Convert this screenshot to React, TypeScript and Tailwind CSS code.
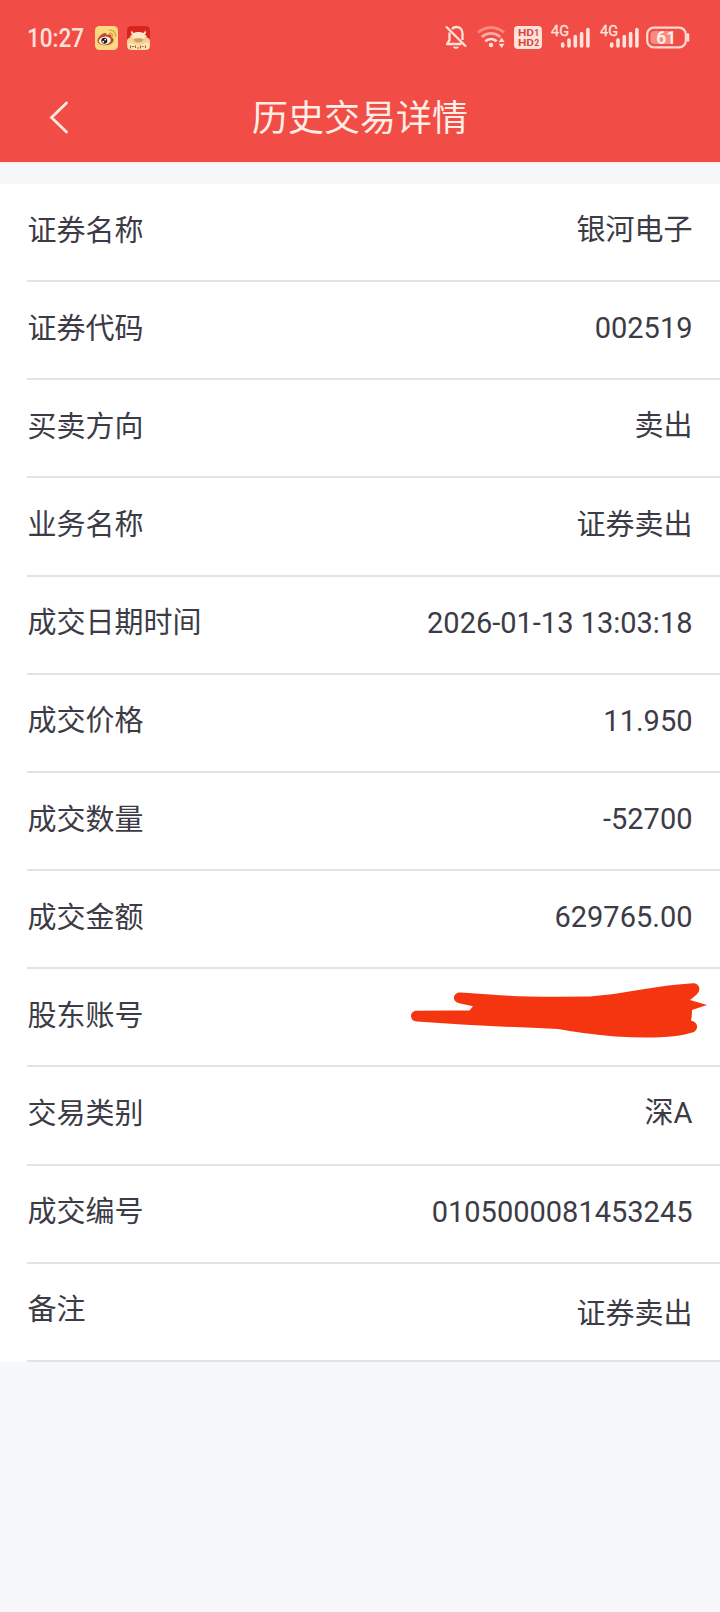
type Row = { label: string; value?: string; low?: boolean };

const rows: Row[] = [
  { label: '证券名称', value: '银河电子' },
  { label: '证券代码', value: '002519' },
  { label: '买卖方向', value: '卖出' },
  { label: '业务名称', value: '证券卖出' },
  { label: '成交日期时间', value: '2026-01-13 13:03:18' },
  { label: '成交价格', value: '11.950' },
  { label: '成交数量', value: '-52700' },
  { label: '成交金额', value: '629765.00' },
  { label: '股东账号' },
  { label: '交易类别', value: '深A' },
  { label: '成交编号', value: '0105000081453245' },
  { label: '备注', value: '证券卖出', low: true },
];

function WeiboIcon() {
  return (
    <svg width="23" height="24" viewBox="0 0 23 24">
      <rect width="23" height="24" rx="4.5" fill="#fbd983" />
      <path d="M2.5 14.5C3 10.500 8 6.500 10.500 7c1.500.3 1 2 1 2s4.500-1.500 5 .8c.2 1-.2 1.500-.2 1.500s2.700.7 2.200 3.200C18 17.500 14 19.500 9.500 19.300 5.500 19 2.300 17.500 2.500 14.500z" fill="#bb4b32" />
      <ellipse cx="9.800" cy="14.600" rx="6" ry="4" fill="#fff6df" transform="rotate(-8 9.800 14.600)" />
      <circle cx="9.300" cy="14.700" r="3" fill="#2b1714" />
      <circle cx="10.300" cy="13.600" r=".9" fill="#fff" />
      <circle cx="8.200" cy="15.700" r="1" fill="#fff" />
      <path d="M14.500 7.300c2-.4 3.500 1 3.200 3M14.500 4.300c3.600-.6 6.600 2.300 6 6" fill="none" stroke="#e0a23c" strokeWidth="1.300" strokeLinecap="round" />
    </svg>
  );
}

function BullIcon() {
  return (
    <svg width="23" height="24" viewBox="0 0 23 24">
      <rect width="23" height="24" rx="4.500" fill="#d8241d" />
      <path d="M0 14c2-3 5-4 11.500-4S21 11 23 14v6c0 2.500-1.800 4-4.500 4h-14C1.800 24 0 22.500 0 20z" fill="#f7cf92" />
      <path d="M5.500 4c-.8 1.600 0 2.600 1.500 3 2-1.200 7-1.200 9 0 1.500-.4 2.300-1.400 1.500-3 2 1.500 2 4 0 5l2.500.8c-.5 1.400-1.500 1.700-2.800 1.700-1 2.500-2.800 3.500-5.700 3.500s-4.700-1-5.700-3.500C4.500 11.500 3.500 11.200 3 9.800L5.500 9c-2-1-2-3.500 0-5z" fill="#ffe9cb" />
      <path d="M6.500 13c2-1 8-1 10 0-.5 2.500-2.500 3.500-5 3.500s-4.500-1-5-3.500z" fill="#cf9f5e" />
      <path d="M1 17c2-1 4-.5 5 .5 3 1.200 8 1.200 11 0 1-1 3-1.500 5-.5v4.500c0 1-1 2-3 2H4c-2 0-3-1-3-2z" fill="#ffe5b5" />
      <path d="M3.500 19.500v3M5 20.500h2M8.500 19.500v2.500M10 22h2M13.500 19.500v3M15 20.500h1.500M18.500 19.500v2.500" stroke="#9c5a30" strokeWidth="1.100" />
    </svg>
  );
}

function MutedBellIcon() {
  return (
    <svg width="22" height="25" viewBox="0 0 22 25" fill="none" stroke="#ffe3da" strokeWidth="2.300">
      <path d="M7 4C8 2.700 9.500 2 11.200 2c4 0 6.300 2.700 6.300 6.500v6.500M4.500 7.500V15L2 19h14.500" strokeLinejoin="round" />
      <path d="M1 1.500L21 21.500" />
      <path d="M8.500 22.200c1 1.500 4 1.500 5 0z" fill="#ffe3da" strokeWidth="1" />
    </svg>
  );
}

function WifiIcon() {
  return (
    <svg width="29" height="23" viewBox="0 0 29 23" fill="none" strokeWidth="2.800">
      <path d="M1 6.500c7.500-6.600 18.500-6.600 26 0" stroke="#f88d82" />
      <path d="M4.700 11c5.500-4.800 13.100-4.800 18.600 0" stroke="#fbaca1" />
      <path d="M8.300 15.300c3.400-3 8-3 11.400 0" stroke="#ffe3da" />
      <circle cx="14" cy="19" r="2.200" fill="#ffe3da" />
      <path d="M21.600 16l3-4.200 3 4.200zM21.600 17.800l3 4.200 3-4.200z" fill="#ffe3da" />
    </svg>
  );
}

function HdIcon() {
  return (
    <svg width="28" height="23" viewBox="0 0 28 23" fontFamily="Roboto, sans-serif" fontWeight="700" fill="#d5483f">
      <rect width="28" height="23" rx="4" fill="#ffe3da" />
      <text x="4" y="10.300" fontSize="9.800" textLength="16" lengthAdjust="spacingAndGlyphs">HD</text>
      <text x="20.300" y="10.300" fontSize="8.800">1</text>
      <text x="4" y="19.800" fontSize="9.800" textLength="16" lengthAdjust="spacingAndGlyphs">HD</text>
      <text x="20.300" y="19.800" fontSize="8.800">2</text>
    </svg>
  );
}

function SignalIcon() {
  return (
    <svg className="overflow-visible" width="40" height="23" viewBox="0 0 40 23">
      <text x="0" y="10" fontSize="14" fontFamily="Roboto, sans-serif" fontWeight="400" fill="#ffe3da" stroke="#ffe3da" strokeWidth=".3" textLength="18" lengthAdjust="spacingAndGlyphs">4G</text>
      <path d="M11.700 20v-2M18 20v-6M24.300 20v-9.500M30.600 20V7.500M36.900 20V3.500" stroke="#ffe3da" strokeWidth="3.600" strokeLinecap="round" />
    </svg>
  );
}

function BatteryIcon() {
  return (
    <svg width="44" height="23" viewBox="0 0 44 23">
      <rect x="1.200" y="1.700" width="38.600" height="19.600" rx="6.500" fill="none" stroke="#ffd9cf" strokeWidth="2.200" />
      <path d="M9 5h17.500v13H9c-3 0-4.500-1.500-4.500-4V9c0-2.500 1.500-4 4.500-4z" fill="#f78b80" />
      <path d="M42 8.500v6" stroke="#ffe3da" strokeWidth="2.400" strokeLinecap="round" />
      <text x="20.300" y="17.700" fontSize="17.500" fontFamily="Roboto, sans-serif" fontWeight="600" fill="#fff0e8" textAnchor="middle">61</text>
    </svg>
  );
}

function Scribble() {
  return (
    <svg className="-mt-[14px] -mr-[14px]" width="300" height="60" viewBox="0 0 300 60">
      <path d="M17 34.500C9 34.500 9 23.500 17 23.700Q45 23.300 69.500 23.500L73 19.200L59 16.300C51 14.500 53 4.500 61 5.500L90 7.500Q120 10 160 9.700L190 9.600Q215 7.500 240 2.800Q270-2.500 293-3.800C300-4 302 4 295 9L290 13L307 18L292 23Q292 30 291 33.500C298 35 299 42 294 45Q270 53 215 49.500Q185 47 158 42Q80 39 17 34.500Z" fill="#f53510" transform="translate(-7 7)" />
    </svg>
  );
}

export default function App() {
  return (
    <div className="flex h-[1612px] w-[720px] flex-col bg-[#f6f7f9] font-['Roboto','Noto_Sans_CJK_SC',sans-serif] text-[#3c3b46]">
      <header className="flex h-[162px] shrink-0 flex-col bg-[#f14d46]">
        <div className="flex h-[75px] items-center pr-[30px] pl-[27px]">
          <span className="w-[58px] origin-left scale-x-90 pt-[2px] text-[25px] leading-none font-medium text-[#ffe3da]">10:27</span>
          <div className="ml-[10px] flex gap-[9px]">
            <WeiboIcon />
            <BullIcon />
          </div>
          <div className="ml-auto flex items-center pb-[1px]">
            <MutedBellIcon />
            <div className="ml-[10px]"><WifiIcon /></div>
            <div className="ml-[8px]"><HdIcon /></div>
            <div className="ml-[9px]"><SignalIcon /></div>
            <div className="ml-[9px]"><SignalIcon /></div>
            <div className="ml-[6px]"><BatteryIcon /></div>
          </div>
        </div>
        <div className="grid h-[87px] grid-cols-[100px_1fr_100px] items-center pb-[3px]">
          <svg className="ml-[49px]" width="20" height="34" viewBox="0 0 20 34">
            <path d="M17.500 3L2.500 17.500L17.500 32" fill="none" stroke="#ffe8e0" strokeWidth="2.800" strokeLinecap="round" />
          </svg>
          <h1 className="pt-[3px] text-center text-[36px] leading-none font-normal text-[#ffeee6]">历史交易详情</h1>
        </div>
      </header>
      <div className="h-[2px] shrink-0 bg-[#fdf0ef]" />
      <main className="mt-[20px] bg-white pl-[27px]">
        {rows.map((row) => (
          <div key={row.label} className="flex h-[98.170px] items-center justify-between border-b-2 border-[#e2e2e4] pr-[27.500px] pl-[0.500px] text-[29px] leading-none">
            <span className="pb-[2px]">{row.label}</span>
            {row.value ? <span className={row.low ? 'pt-[6px]' : 'pb-[3px]'}>{row.value}</span> : <Scribble />}
          </div>
        ))}
      </main>
    </div>
  );
}
